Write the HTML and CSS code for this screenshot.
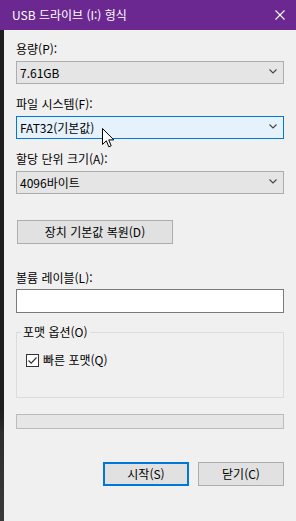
FILE: index.html
```html
<!DOCTYPE html>
<html lang="ko">
<head>
  <meta charset="UTF-8">
  <meta name="viewport" content="width=device-width, initial-scale=1.0">
  <title>USB 드라이브 (I:) 형식</title>
  <link rel="stylesheet" href="styles.css">
</head>
<body>

<!-- Title bar -->
<div class="titlebar">
  <span class="title">USB 드라이브 (I:) 형식</span>
  <svg class="close" width="10" height="10" viewBox="0 0 10 10">
    <path d="M0.5 0.5 L9.5 9.5 M9.5 0.5 L0.5 9.5" stroke="#fff" stroke-width="1.1" fill="none"/>
  </svg>
</div>

<div class="window">
  <!-- Edge of the window behind -->
  <div class="backdrop"></div>

  <div class="dialog">
    <div class="field first">
      <div class="label">용량(P):</div>
      <div class="combo">
        <span>7.61GB</span>
        <svg class="chevron" width="8" height="5" viewBox="0 0 8 5"><path d="M0.5 0.5 L4 4 L7.5 0.5" stroke="#444" stroke-width="1.1" fill="none"/></svg>
      </div>
    </div>

    <div class="field">
      <div class="label">파일 시스템(F):</div>
      <div class="combo focused">
        <span>FAT32(기본값)</span>
        <svg class="chevron" width="8" height="5" viewBox="0 0 8 5"><path d="M0.5 0.5 L4 4 L7.5 0.5" stroke="#444" stroke-width="1.1" fill="none"/></svg>
      </div>
    </div>

    <div class="field">
      <div class="label">할당 단위 크기(A):</div>
      <div class="combo">
        <span>4096바이트</span>
        <svg class="chevron" width="8" height="5" viewBox="0 0 8 5"><path d="M0.5 0.5 L4 4 L7.5 0.5" stroke="#444" stroke-width="1.1" fill="none"/></svg>
      </div>
    </div>

    <button class="btn restore">장치 기본값 복원(D)</button>

    <div class="field volume">
      <div class="label">볼륨 레이블(L):</div>
      <input type="text" class="textbox">
    </div>

    <fieldset class="group">
      <legend>포맷 옵션(O)</legend>
      <label class="check">
        <span class="box">
          <svg width="11" height="11" viewBox="0 0 11 11"><path d="M1.5 5.5 L4.2 8.2 L9.5 2.5" stroke="#333" stroke-width="1.2" fill="none"/></svg>
        </span>
        빠른 포맷(Q)
      </label>
    </fieldset>

    <div class="progress"></div>

    <div class="actions">
      <button class="btn default">시작(S)</button>
      <button class="btn">닫기(C)</button>
    </div>
  </div>
</div>

<!-- Mouse pointer -->
<svg class="cursor" width="13" height="21" viewBox="0 0 13 21">
  <path d="M0.5 0.5 L0.5 16.5 L4.3 12.8 L6.8 18.8 L9.2 17.8 L6.7 11.9 L11.8 11.9 Z" fill="#fff" stroke="#000" stroke-width="1"/>
</svg>

</body>
</html>
```

FILE: styles.css
```css
body {
  margin: 0;
  padding: 0;
  width: 296px;
  height: 521px;
  overflow: hidden;
  font-family: "Noto Sans CJK KR", "Noto Sans", sans-serif;
  font-size: 12px;
  color: #000;
  background-color: #f0f0f0;
  position: relative;
}
.titlebar {
  height: 30px;
  background-color: #6b2890;
  display: flex;
  align-items: center;
  justify-content: space-between;
  padding: 0 11px 0 12px;
}
.title {
  color: #fff;
  font-size: 12px;
  line-height: 16px;
}
.close {
  margin-top: -1px;
}
.window {
  display: flex;
  height: 491px;
}
.backdrop {
  width: 4px;
  background: linear-gradient(#1e1e1e 0%, #1e1e1e 78%, #2e2c2e 82%, #3a383a 100%);
}
.dialog {
  flex-grow: 1;
  padding: 11px 12px 0 12px;
  display: flex;
  flex-direction: column;
  align-items: flex-start;
}
.field {
  width: 100%;
  margin-top: 12px;
}
.field.first {
  margin-top: 0;
}
.label {
  line-height: 16px;
  margin-bottom: 4px;
}
.combo {
  box-sizing: border-box;
  height: 23px;
  border: 1px solid #adadad;
  background-color: #e5e5e5;
  display: flex;
  align-items: center;
  justify-content: space-between;
  padding: 0 6px 1px 3px;
}
.combo.focused {
  border-color: #0078d7;
  background-color: #e5f1fb;
}
.chevron {
  margin-bottom: 2px;
}
.btn {
  box-sizing: border-box;
  height: 24px;
  width: 86px;
  border: 1px solid #adadad;
  background-color: #e1e1e1;
  font-family: "Noto Sans CJK KR", "Noto Sans", sans-serif;
  font-size: 12px;
  color: #000;
  padding: 0 0 1px;
}
.btn.restore {
  width: 156px;
  margin: 26px 0 0 1px;
}
.btn.default {
  border: 2px solid #0078d7;
}
.field.volume {
  margin-top: 26px;
}
.field.volume .label {
  margin-bottom: 3px;
}
.textbox {
  box-sizing: border-box;
  display: block;
  width: 100%;
  height: 24px;
  margin: 0;
  border: 1px solid #7a7a7a;
  background-color: #fff;
}
.group {
  box-sizing: border-box;
  width: 100%;
  margin: 11px 0 0;
  padding: 12px 0 29px 9px;
  border: 1px solid #dcdcdc;
  min-width: 0;
}
.group legend {
  line-height: 16px;
  padding: 0 2px;
  margin-left: -5px;
}
.check {
  display: flex;
  align-items: center;
  line-height: 16px;
}
.check .box {
  box-sizing: border-box;
  width: 13px;
  height: 13px;
  border: 1px solid #333;
  background-color: #fff;
  display: flex;
  align-items: center;
  justify-content: center;
  margin-right: 4px;
}
.progress {
  box-sizing: border-box;
  width: 100%;
  height: 15px;
  margin-top: 16px;
  border: 1px solid #bcbcbc;
  background-color: #e6e6e6;
}
.actions {
  width: 100%;
  display: flex;
  justify-content: flex-end;
  gap: 9px;
  margin-top: 33px;
}
.cursor {
  position: absolute;
  left: 102px;
  top: 128px;
}
```
